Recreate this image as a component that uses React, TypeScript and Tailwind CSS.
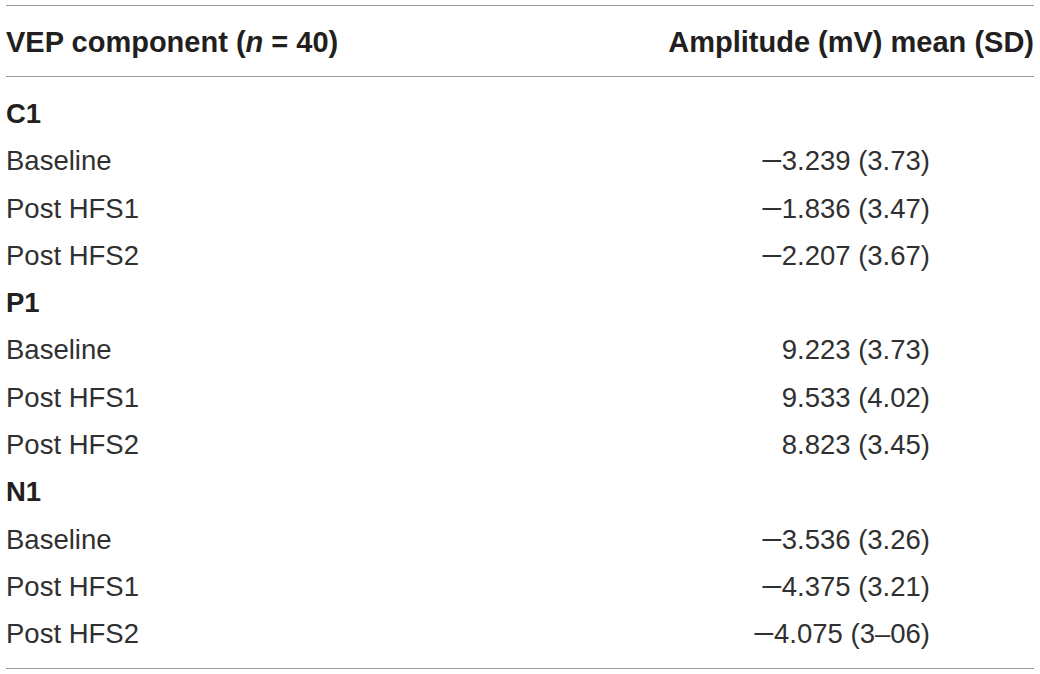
const groups = [
  {
    name: 'C1',
    rows: [
      ['Baseline', '\u22123.239 (3.73)'],
      ['Post HFS1', '\u22121.836 (3.47)'],
      ['Post HFS2', '\u22122.207 (3.67)'],
    ],
  },
  {
    name: 'P1',
    rows: [
      ['Baseline', '9.223 (3.73)'],
      ['Post HFS1', '9.533 (4.02)'],
      ['Post HFS2', '8.823 (3.45)'],
    ],
  },
  {
    name: 'N1',
    rows: [
      ['Baseline', '\u22123.536 (3.26)'],
      ['Post HFS1', '\u22124.375 (3.21)'],
      ['Post HFS2', '\u22124.075 (3\u201306)'],
    ],
  },
];

// the source uses a long minus, wider than the font's own glyph
function Value({ text }: { text: string }) {
  if (!text.startsWith('\u2212')) return <span>{text}</span>;
  return (
    <span>
      <span className="inline-block w-[21px] text-center scale-x-[1.4]">{'\u2212'}</span>
      {text.slice(1)}
    </span>
  );
}

export default function App() {
  return (
    <div className="w-[1040px] h-[674px] bg-white pt-[5px] pl-[6px]" style={{ fontFamily: '"Liberation Sans", Arial, sans-serif' }}>
      <div className="w-[1028px] border-t border-b border-[#9a9a9a]">
        {/* header */}
        <div className="flex justify-between items-center h-[71px] pt-[1px] border-b border-[#9a9a9a] text-[29px] font-bold text-[#231f20] leading-[70px]">
          <span>
            VEP component (<i>n</i> = 40)
          </span>
          <span>Amplitude (mV) mean (SD)</span>
        </div>

        {/* body */}
        <div className="pt-[13px] pb-[10px] text-[27.5px] text-[#303030]">
          {groups.map((g) => (
            <div key={g.name}>
              <div className="h-[47.3px] leading-[47.3px] font-bold text-[#231f20]">{g.name}</div>
              {g.rows.map(([label, value], i) => (
                <div key={i} className="flex justify-between h-[47.3px] leading-[47.3px]">
                  <span>{label}</span>
                  <span className="pr-[104px]">
                    <Value text={value} />
                  </span>
                </div>
              ))}
            </div>
          ))}
        </div>
      </div>
    </div>
  );
}
